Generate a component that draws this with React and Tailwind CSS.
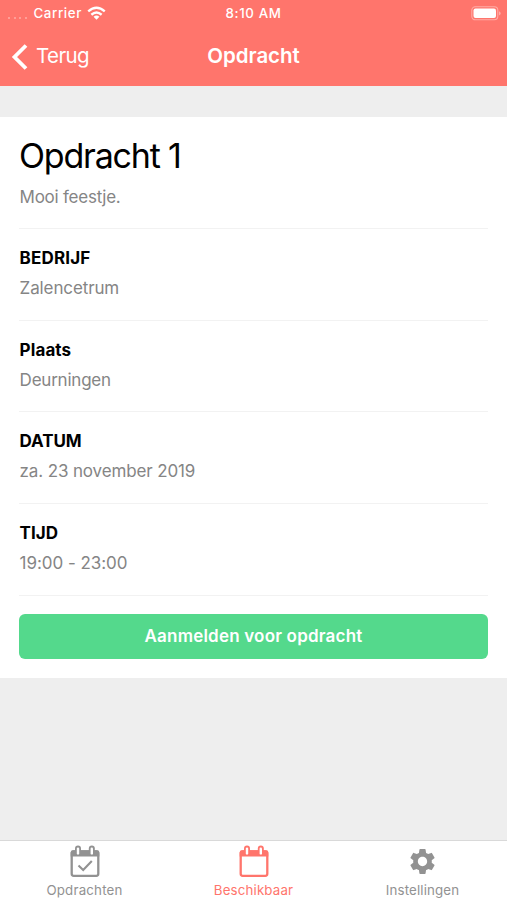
import { MdSettings } from 'react-icons/md';

const details = [
  { label: 'BEDRIJF', value: 'Zalencetrum', labelStyle: 'tracking-[0.15px]', valueStyle: 'tracking-[-0.12px]' },
  { label: 'Plaats', value: 'Deurningen', labelStyle: 'tracking-[0.1px]', valueStyle: 'tracking-[-0.22px]' },
  { label: 'DATUM', value: 'za. 23 november 2019', labelStyle: 'tracking-[-0.1px]', valueStyle: 'tracking-[-0.13px]' },
  { label: 'TIJD', value: '19:00 - 23:00', labelStyle: 'tracking-[0.05px]', valueStyle: 'tracking-[-0.04px]' },
];

function Calendar({ checked }) {
  return (
    <svg width="30" height="33" viewBox="0 0 30 33" fill="none">
      <rect x="1.7" y="6.5" width="26.6" height="24.3" rx="2" stroke="currentColor" strokeWidth="2.3" />
      <path d="M0.7 7.5Q0.7 5.2 3 5.2H27Q29.3 5.2 29.3 7.5V11.6H0.7Z" fill="currentColor" />
      {[8, 21.8].map((x) => (
        <g key={x}>
          <rect x={x - 3} y="0.6" width="6" height="10.2" rx="3" fill="currentColor" />
          <rect x={x - 1.2} y="2.6" width="2.4" height="7" rx="1.2" fill="white" />
        </g>
      ))}
      {checked && <path d="M8.5 20.5L13.2 25L21.8 16" stroke="currentColor" strokeWidth="2.1" />}
    </svg>
  );
}

function StatusBar() {
  return (
    <div className="grid h-[27px] grid-cols-3 items-center text-[13.3px] font-medium">
      <div className="flex items-center pl-[8px]">
        <div className="mt-[8px] flex gap-[3.5px]">
          {[0, 1, 2, 3].map((dot) => (
            <span key={dot} className="size-[2px] rounded-full bg-white/40" />
          ))}
        </div>
        <span className="ml-[7px] tracking-[0.6px]">Carrier</span>
        <svg className="ml-[5px]" width="19" height="15" viewBox="0 0 20 15" fill="none" stroke="white" strokeWidth="2.5">
          <path d="M1.3 5.2Q10 -2.2 18.7 5.2" />
          <path d="M4.6 8.8Q10 4.1 15.4 8.8" />
          <path d="M10 14L6.9 10.9Q10 8.4 13.1 10.9Z" fill="white" stroke="none" />
        </svg>
      </div>
      <span className="text-center tracking-[0.6px]">8:10 AM</span>
      <svg className="mr-[5px] mb-[1px] justify-self-end" width="31" height="15" viewBox="0 0 31 15" fill="none">
        <rect x="0.8" y="0.8" width="26" height="13" rx="3.5" stroke="white" strokeOpacity=".4" strokeWidth="1.1" />
        <rect x="2.5" y="2.5" width="22.5" height="9.6" rx="2" fill="white" />
        <path d="M28.2 5.2Q31 7.4 28.2 9.6Z" fill="white" fillOpacity=".5" />
      </svg>
    </div>
  );
}

export default function App() {
  return (
    <div className="flex h-[900px] w-full flex-col bg-[#eeeeee] font-[Inter,'Liberation_Sans',sans-serif] text-black">
      <header className="h-[86px] shrink-0 bg-[#ff756c] text-white">
        <StatusBar />
        <div className="grid h-[59px] grid-cols-3 items-center">
          <button className="flex items-center pl-[11px] text-[20.5px]">
            <svg width="18" height="28" viewBox="0 0 18 28" fill="none" stroke="white" strokeWidth="3.8">
              <path d="M15 2.5L3.5 14L15 25.5" />
            </svg>
            <span className="ml-[7px] tracking-[-0.6px]">Terug</span>
          </button>
          <h1 className="text-center text-[20.5px] font-semibold tracking-[-0.05px]">Opdracht</h1>
        </div>
      </header>

      <main className="mt-[31px] h-[561px] shrink-0 bg-white px-[19px]">
        <section className="h-[112px] border-b border-[#f2f2f2] pt-[19px]">
          <h2 className="text-[34px] leading-[40px] tracking-[-1.2px]">Opdracht 1</h2>
          <p className="mt-[6px] pl-[0.5px] text-[17px] leading-[30px] tracking-[-0.22px] text-[#858585]">Mooi feestje.</p>
        </section>
        {details.map(({ label, value, labelStyle, valueStyle }) => (
          <section key={label} className="h-[91.67px] border-b border-[#f2f2f2] pt-[14px] pl-[0.6px] text-[17px] leading-[30px]">
            <h3 className={`font-bold ${labelStyle}`}>{label}</h3>
            <p className={`text-[#858585] ${valueStyle}`}>{value}</p>
          </section>
        ))}
        <button className="mt-[18px] h-[45px] w-full rounded-[6px] bg-[#54d98c] pt-[2px] text-[17px] font-semibold tracking-[0.2px] text-white">
          Aanmelden voor opdracht
        </button>
      </main>

      <nav className="mt-auto grid h-[60px] grid-cols-3 border-t border-[#d9d9d9] bg-white text-[13.3px] text-[#929292]">
        <div className="flex flex-col items-center pt-[4px]">
          <Calendar checked />
          <span className="mt-[3px] leading-[18px] tracking-[0.2px]">Opdrachten</span>
        </div>
        <div className="flex flex-col items-center pt-[4px] text-[#ff756c]">
          <Calendar />
          <span className="mt-[3px] leading-[18px] tracking-[0.15px]">Beschikbaar</span>
        </div>
        <div className="flex flex-col items-center pt-[4px]">
          <MdSettings className="h-[33px] w-[31px]" />
          <span className="mt-[3px] leading-[18px] tracking-[0.15px]">Instellingen</span>
        </div>
      </nav>
    </div>
  );
}
